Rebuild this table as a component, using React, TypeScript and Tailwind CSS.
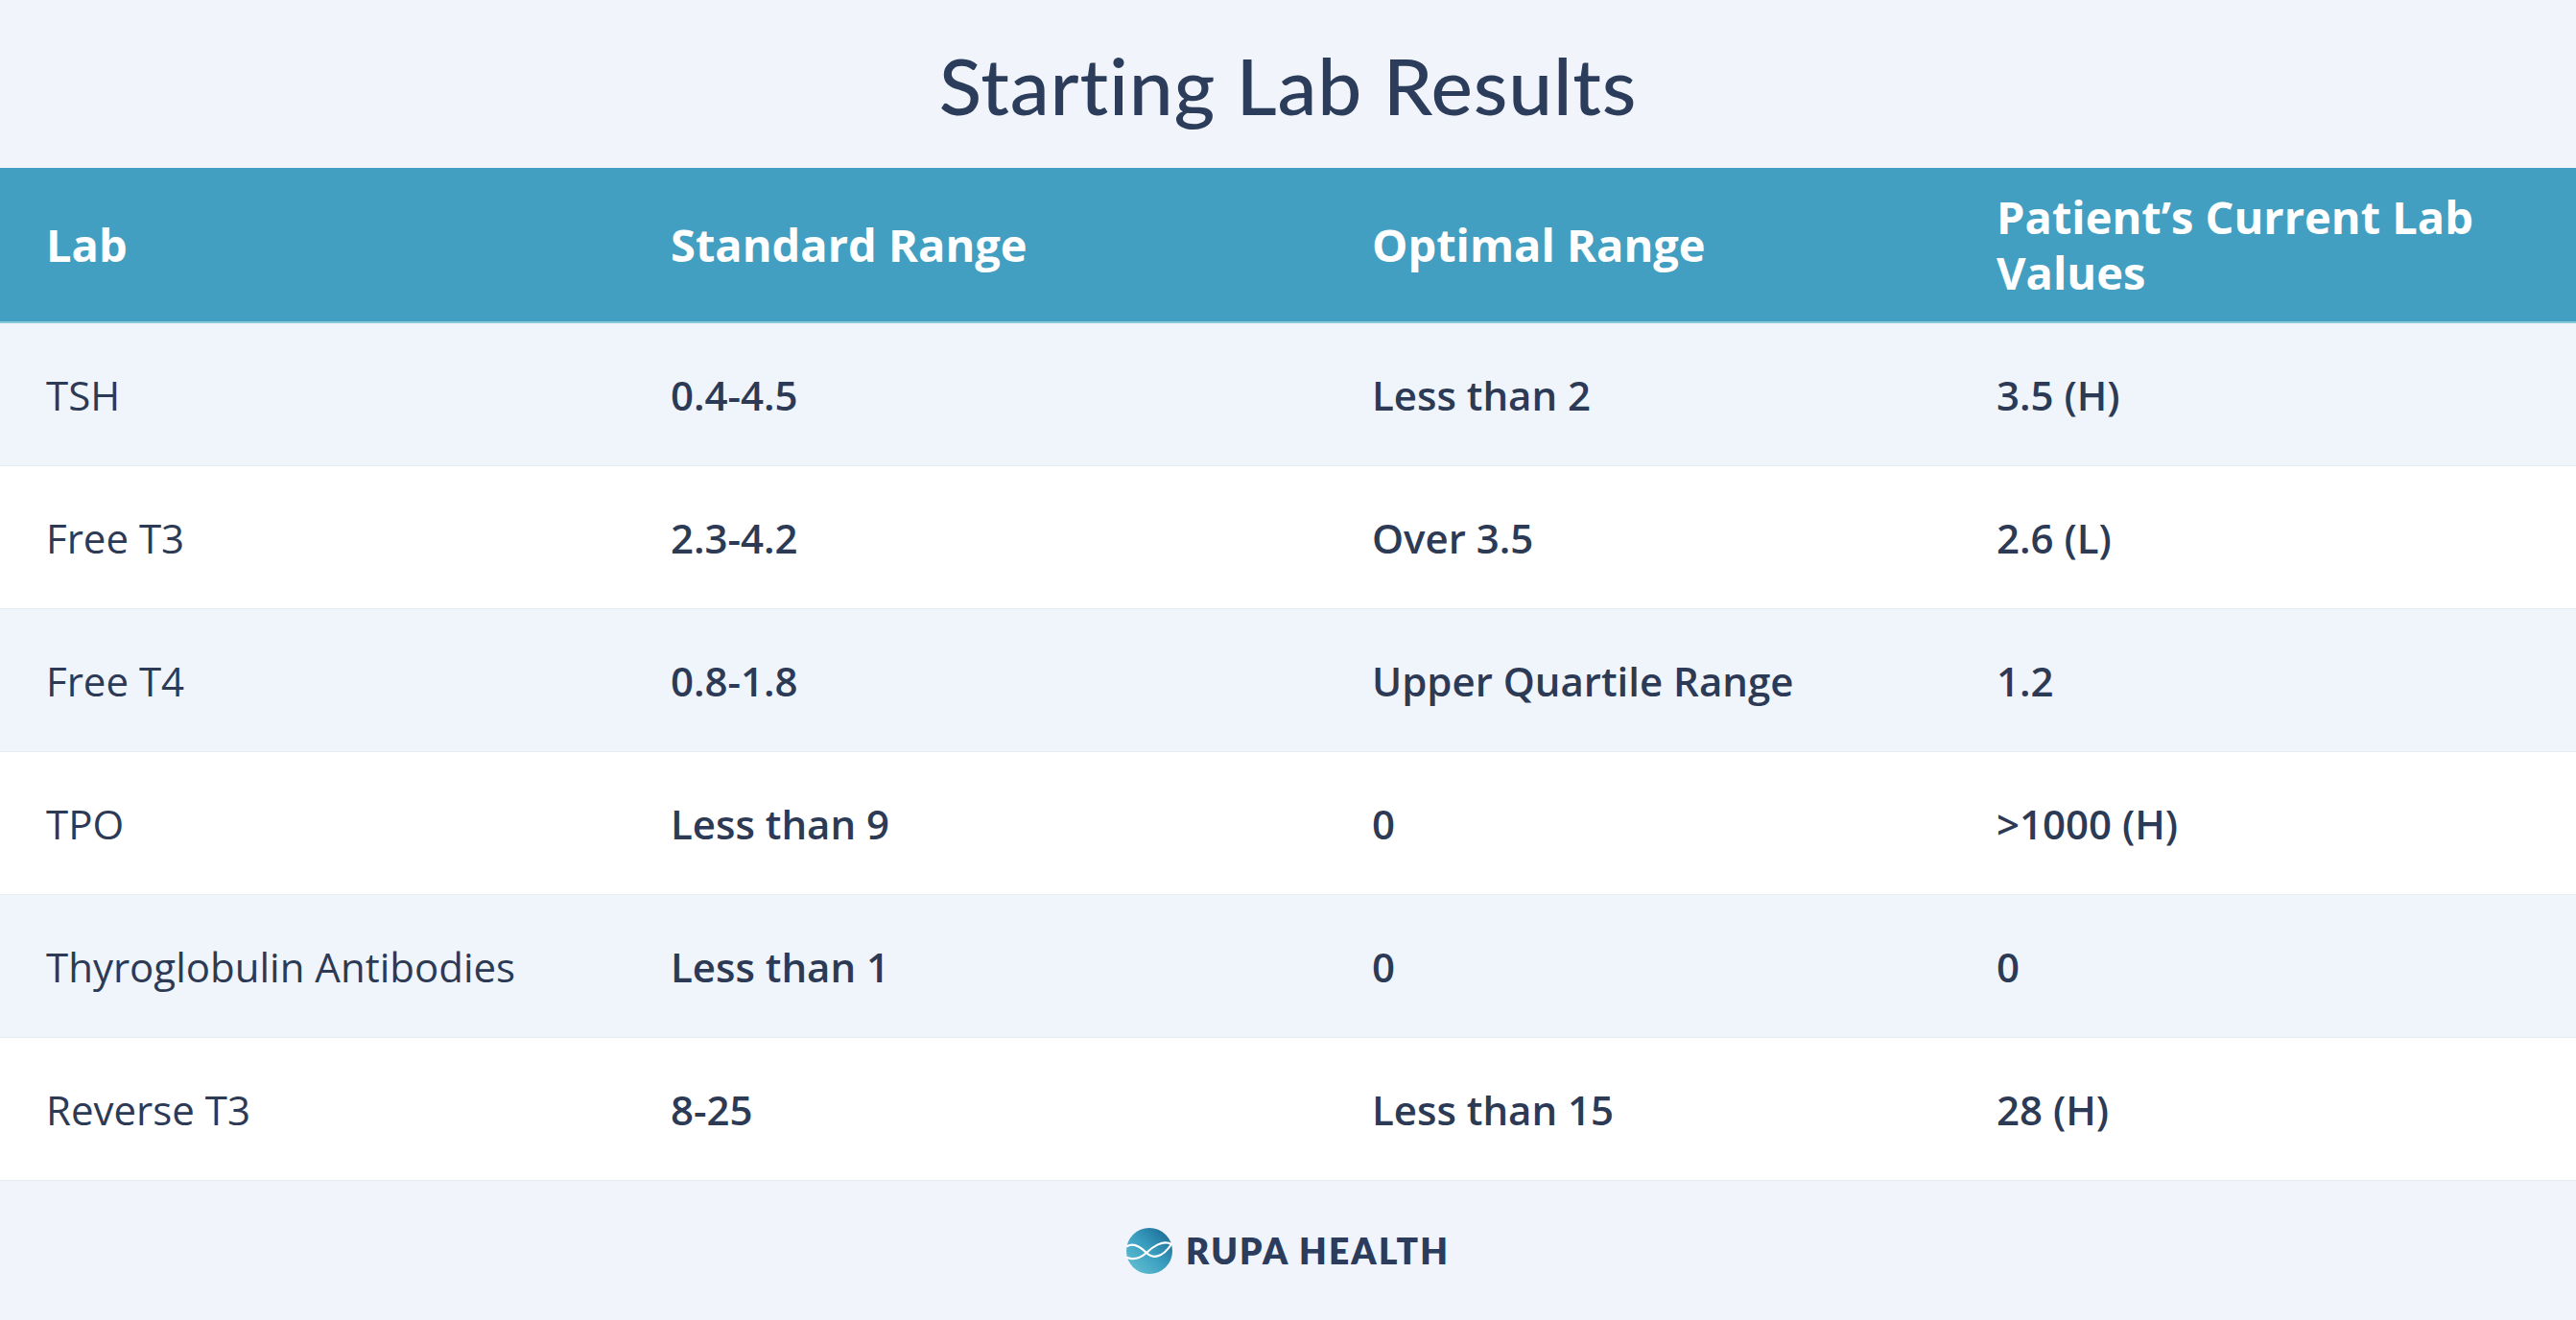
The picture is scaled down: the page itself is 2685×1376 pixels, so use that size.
const rows = [
  ['TSH', '0.4-4.5', 'Less than 2', '3.5 (H)'],
  ['Free T3', '2.3-4.2', 'Over 3.5', '2.6 (L)'],
  ['Free T4', '0.8-1.8', 'Upper Quartile Range', '1.2'],
  ['TPO', 'Less than 9', '0', '>1000 (H)'],
  ['Thyroglobulin Antibodies', 'Less than 1', '0', '0'],
  ['Reverse T3', '8-25', 'Less than 15', '28 (H)'],
]

const cols = 'grid grid-cols-[651px_731px_651px_1fr]'

function RupaLogo() {
  return (
    <svg width="48" height="48" viewBox="0 0 48 48">
      <defs>
        <linearGradient id="rupa" x1="0" y1="1" x2="1" y2="0">
          <stop offset="0" stopColor="#6cc6d6" />
          <stop offset="0.5" stopColor="#3a9fc0" />
          <stop offset="1" stopColor="#17628f" />
        </linearGradient>
      </defs>
      <circle cx="24" cy="24" r="24" fill="url(#rupa)" />
      <path
        d="M1 19 C 8 15, 15 20, 21 26 C 27 32, 37 32, 47 17"
        fill="none"
        stroke="#fff"
        strokeWidth="2.2"
        strokeLinecap="round"
      />
      <path
        d="M1 31 C 8 34, 15 31, 21 26 C 27 20, 38 12, 47 17"
        fill="none"
        stroke="#fff"
        strokeWidth="2.2"
        strokeLinecap="round"
      />
    </svg>
  )
}

export default function App() {
  return (
    <div className="flex h-[1376px] w-full flex-col bg-[#f1f4fb] font-['Open_Sans',sans-serif] text-[#2c3a55]">
      <div className="flex h-[175px] items-center justify-center">
        <h1 className="font-['Lato',sans-serif] text-[82px] font-medium leading-none tracking-[0.01em] text-[#2b3d5a]">
          Starting Lab Results
        </h1>
      </div>

      <div className={`${cols} h-[162px] items-center border-b-2 border-[#8cc8dc] bg-[#439fc1] text-[47px] font-bold leading-[58px] text-white`}>
        <div className="pl-[48px]">Lab</div>
        <div className="pl-[48px]">Standard Range</div>
        <div className="pl-[48px]">Optimal Range</div>
        <div className="pr-[40px] pl-[48px]">Patient’s Current Lab Values</div>
      </div>

      {rows.map((row, i) => (
        <div
          key={row[0]}
          className={`${cols} h-[149px] items-center border-b border-[#e8ecf3] text-[42px] ${
            i % 2 === 0 ? 'bg-[#f0f4fb]' : 'bg-white'
          }`}
        >
          <div className="pl-[48px] font-normal">{row[0]}</div>
          <div className="pl-[48px] font-semibold">{row[1]}</div>
          <div className="pl-[48px] font-semibold">{row[2]}</div>
          <div className="pl-[48px] font-semibold">{row[3]}</div>
        </div>
      ))}

      <div className="flex flex-1 items-center justify-center gap-[14px]">
        <RupaLogo />
        <span className="font-['Lato',sans-serif] text-[37px] font-extrabold leading-none tracking-[0.06em] text-[#2b3c5c]">
          RUPA HEALTH
        </span>
      </div>
    </div>
  )
}
